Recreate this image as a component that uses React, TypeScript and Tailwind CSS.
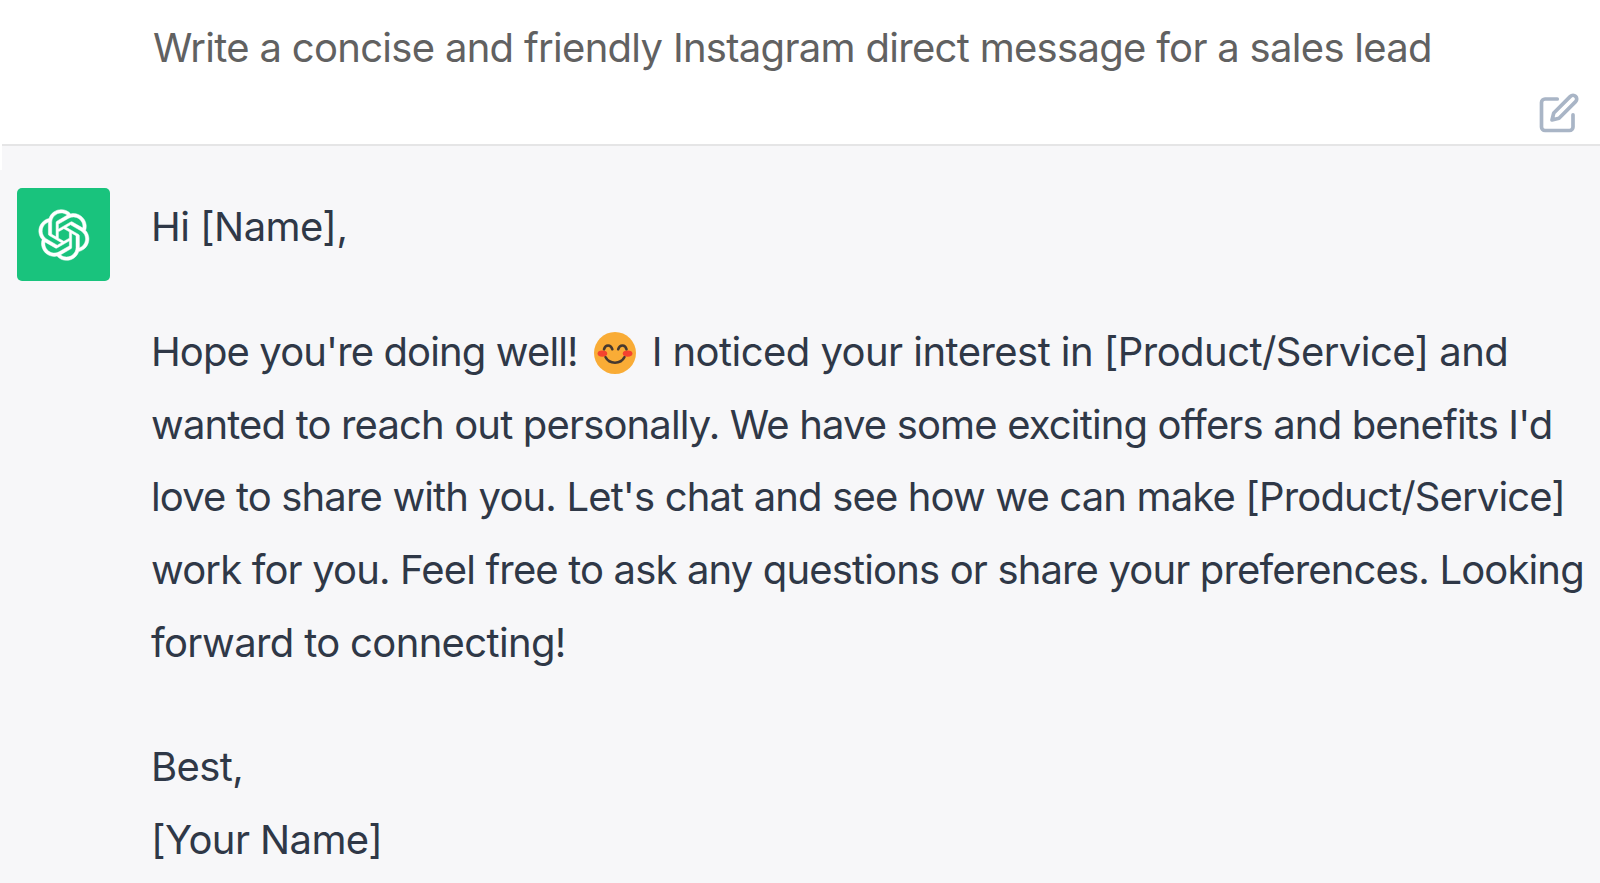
const LOGO = "M37.5324 16.8707C37.9808 15.5241 38.1363 14.0974 37.9886 12.6859C37.8409 11.2744 37.3934 9.91076 36.676 8.68622C35.6126 6.83404 33.9882 5.3676 32.0373 4.4985C30.0864 3.62941 27.9098 3.40259 25.8215 3.85078C24.8796 2.7893 23.7219 1.94125 22.4257 1.36341C21.1295 0.785575 19.7249 0.491269 18.3058 0.500197C16.1708 0.495044 14.0893 1.16803 12.3614 2.42214C10.6335 3.67624 9.34853 5.44666 8.6917 7.47815C7.30085 7.76286 5.98686 8.3414 4.8377 9.17505C3.68854 10.0087 2.73073 11.0782 2.02839 12.312C0.956464 14.1591 0.498905 16.2988 0.721698 18.4228C0.944492 20.5467 1.83612 22.5449 3.268 24.1293C2.81966 25.4759 2.66413 26.9026 2.81182 28.3141C2.95951 29.7256 3.40701 31.0892 4.12437 32.3138C5.18791 34.1659 6.8123 35.6322 8.76321 36.5013C10.7141 37.3704 12.8907 37.5973 14.9789 37.1492C15.9208 38.2107 17.0786 39.0587 18.3747 39.6366C19.6709 40.2144 21.0755 40.5087 22.4946 40.4998C24.6307 40.5054 26.7133 39.8321 28.4418 38.5772C30.1704 37.3223 31.4556 35.5506 32.1119 33.5179C33.5027 33.2332 34.8167 32.6547 35.9659 31.821C37.115 30.9874 38.0728 29.9178 38.7752 28.684C39.8458 26.8371 40.3023 24.6979 40.0789 22.5748C39.8556 20.4517 38.9639 18.4544 37.5324 16.8707ZM22.4978 37.8849C20.7443 37.8874 19.0459 37.2733 17.6994 36.1501C17.7601 36.117 17.8666 36.0586 17.936 36.0161L25.9004 31.4156C26.1003 31.3019 26.2663 31.137 26.3813 30.9378C26.4964 30.7386 26.5563 30.5124 26.5549 30.2825V19.0542L29.9213 20.998C29.9389 21.0068 29.9541 21.0198 29.9656 21.0359C29.977 21.052 29.9842 21.0707 29.9867 21.0902V30.3889C29.9842 32.375 29.1946 34.2791 27.7909 35.6841C26.3872 37.0892 24.4838 37.8806 22.4978 37.8849ZM6.39227 31.0064C5.51397 29.4888 5.19742 27.7107 5.49804 25.9832C5.55718 26.0187 5.66048 26.0818 5.73461 26.1244L13.699 30.7248C13.8975 30.8408 14.1233 30.902 14.3532 30.902C14.583 30.902 14.8088 30.8408 15.0073 30.7248L24.731 25.1103V28.9979C24.7321 29.0177 24.7283 29.0376 24.7199 29.0556C24.7115 29.0736 24.6988 29.0893 24.6829 29.1012L16.6317 33.7497C14.9096 34.7416 12.8643 35.0097 10.9447 34.4954C9.02506 33.9811 7.38785 32.7263 6.39227 31.0064ZM4.29707 13.6194C5.17156 12.0998 6.55279 10.9364 8.19885 10.3327C8.19885 10.4013 8.19491 10.5228 8.19491 10.6071V19.808C8.19351 20.0378 8.25334 20.2638 8.36823 20.4629C8.48312 20.6619 8.64893 20.8267 8.84863 20.9404L18.5723 26.5542L15.206 28.4979C15.1894 28.5089 15.1703 28.5155 15.1505 28.5173C15.1307 28.5191 15.1107 28.516 15.0924 28.5082L7.04046 23.8557C5.32135 22.8601 4.06716 21.2235 3.55289 19.3046C3.03862 17.3858 3.30624 15.3413 4.29707 13.6194ZM31.955 20.0556L22.2312 14.4411L25.5976 12.4981C25.6142 12.4872 25.6333 12.4805 25.6531 12.4787C25.6729 12.4769 25.6928 12.4801 25.7111 12.4879L33.7631 17.1364C34.9967 17.849 36.0017 18.8982 36.6606 20.1613C37.3194 21.4244 37.6047 22.849 37.4832 24.2684C37.3617 25.6878 36.8382 27.0432 35.9743 28.1759C35.1103 29.3086 33.9415 30.1717 32.6047 30.6641C32.6047 30.5947 32.6047 30.4733 32.6047 30.3889V21.188C32.6066 20.9586 32.5474 20.7328 32.4332 20.5338C32.319 20.3348 32.154 20.1698 31.955 20.0556ZM35.3055 15.0128C35.2464 14.9765 35.1431 14.9142 35.069 14.8717L27.1045 10.2712C26.906 10.1554 26.6803 10.0943 26.4504 10.0943C26.2206 10.0943 25.9948 10.1554 25.7963 10.2712L16.0726 15.8858V11.9982C16.0715 11.9783 16.0753 11.9585 16.0837 11.9405C16.0921 11.9225 16.1048 11.9068 16.1207 11.8949L24.1719 7.25025C25.4053 6.53903 26.8158 6.19376 28.2383 6.25482C29.6608 6.31589 31.0364 6.78077 32.2044 7.59508C33.3723 8.40939 34.2842 9.53945 34.8334 10.8531C35.3826 12.1667 35.5464 13.6095 35.3055 15.0128ZM14.2424 21.9419L10.8752 19.9981C10.8576 19.9893 10.8423 19.9763 10.8309 19.9602C10.8195 19.9441 10.8122 19.9254 10.8098 19.9058V10.6071C10.8107 9.18295 11.2173 7.78848 11.9819 6.58696C12.7466 5.38544 13.8377 4.42659 15.1275 3.82264C16.4173 3.21869 17.8524 2.99464 19.2649 3.1767C20.6775 3.35876 22.0089 3.93941 23.1034 4.85067C23.0427 4.88379 22.937 4.94215 22.8668 4.98473L14.9024 9.58517C14.7025 9.69878 14.5366 9.86356 14.4215 10.0626C14.3065 10.2616 14.2466 10.4877 14.2479 10.7175L14.2424 21.9419ZM16.071 17.9991L20.4018 15.4978L24.7325 17.9975V22.9985L20.4018 25.4983L16.071 22.9985V17.9991Z";

function Smile() {
  return (
    <svg viewBox="0 0 40 40" className="inline-block w-[42px] h-[42px] align-[-8px] ml-[16px] mr-[16px]">
      <circle cx="20" cy="20" r="20" fill="#f9ac36" />
      <ellipse cx="8" cy="20.5" rx="4.6" ry="3" fill="#f4432f" />
      <ellipse cx="32" cy="20.5" rx="4.6" ry="3" fill="#f4432f" />
      <path d="M9.5 16.5c1.2-4.8 6.6-4.8 8 0M23 16.5c1.4-4.8 6.8-4.8 8 0M11 24c3.6 7 14.4 7 18 0" fill="none" stroke="#46392f" strokeWidth="2.4" strokeLinecap="round" />
    </svg>
  );
}

export default function App() {
  return (
    <div className="relative w-[1600px] h-[883px] overflow-hidden bg-[#f7f7f9] font-['Inter',sans-serif] text-[40px]">
      <div className="relative h-[146px] bg-white border-b-2 border-[#e5e5e6] pl-[153px] pt-[24px] text-[#616161] leading-[48px] tracking-[-0.7px]">
        Write a concise and friendly Instagram direct message for a sales lead
        <svg viewBox="0 0 24 24" className="absolute right-[20px] top-[92px] w-[42px] h-[42px]" fill="none" stroke="#a9b5c6" strokeWidth="2.1" strokeLinecap="round" strokeLinejoin="round">
          <path d="M11 4H4a2 2 0 0 0-2 2v14a2 2 0 0 0 2 2h14a2 2 0 0 0 2-2v-7" />
          <path d="M18.5 2.5a2.121 2.121 0 0 1 3 3L12 15l-4 1 1-4 9.5-9.5z" />
        </svg>
      </div>
      <div className="absolute left-0 top-[144px] w-[2px] h-[26px] bg-white" />
      <div className="flex pl-[17px] pt-[42px] text-[#2f3847] tracking-[-0.85px]">
        <div className="w-[93px] h-[93px] shrink-0 rounded-[5px] bg-[#19c37d] flex items-center justify-center">
          <svg viewBox="0 0 41 41" className="w-[52px] h-[52px]" fill="#ffffff" stroke="#ffffff" strokeWidth="0.4">
            <path d={LOGO} />
          </svg>
        </div>
        <div className="pl-[41px] leading-[72.8px] whitespace-nowrap">
          <p className="mt-[3px] tracking-[-0.55px]">Hi [Name],</p>
          <p className="mt-[52px]">
            <span className="tracking-[-0.88px]">Hope you're doing well!</span>
            <Smile />
            <span className="tracking-[-0.55px]">I noticed your interest in [Product/Service] and</span>
            <br />
            wanted to reach out personally. We have some exciting offers and benefits I'd
            <br />
            love to share with you. Let's chat and see how we can make [Product/Service]
            <br />
            work for you. Feel free to ask any questions or share your preferences. Looking
            <br />
            <span className="tracking-[-0.65px]">forward to connecting!</span>
          </p>
          <p className="mt-[51px] tracking-[-0.6px]">
            Best,
            <br />
            [Your Name]
          </p>
        </div>
      </div>
    </div>
  );
}
